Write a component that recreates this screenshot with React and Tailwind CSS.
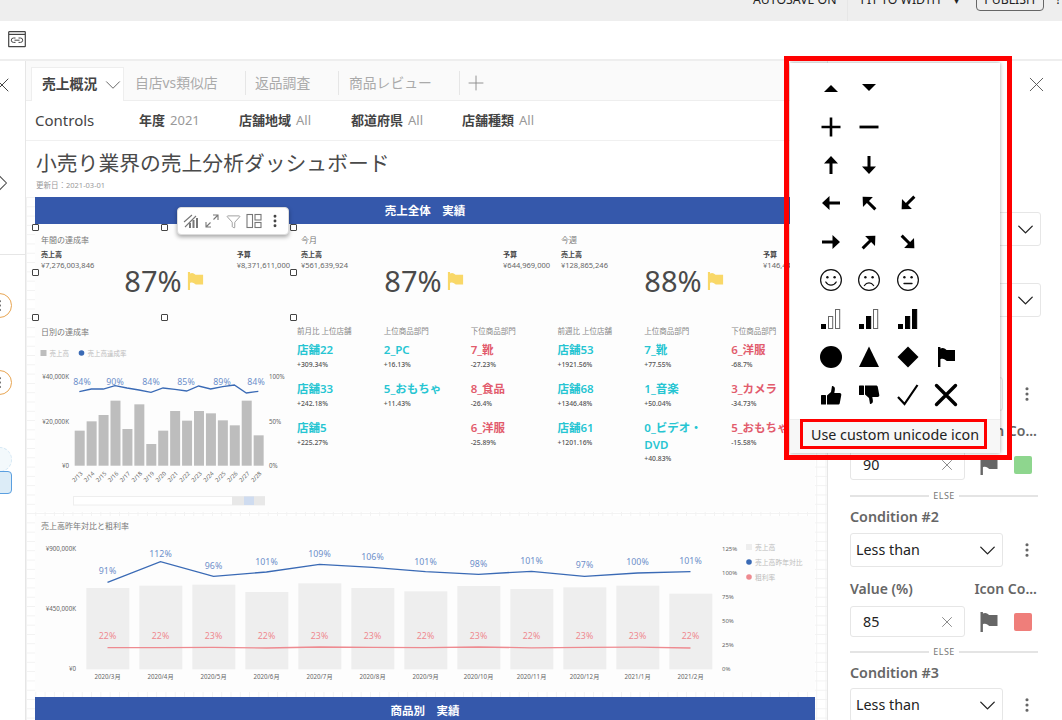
import React from "react";
import { X, ChevronDown, ChevronRight, Plus, EllipsisVertical, Filter } from "lucide-react";

const Arrow = ({ r = 0, s = 1 }) => (
  <svg width="24" height="24" viewBox="0 0 24 24">
    <path transform={`rotate(${r} 12 12) translate(12 12) scale(${s}) translate(-12 -12)`} d="M12 3 L19 10.5 H13.5 V21 H10.5 V10.5 H5 Z" fill="#000" />
  </svg>
);
const Svg = ({ children }) => <svg width="24" height="24" viewBox="0 0 24 24">{children}</svg>;
const Face = ({ mouth }) => (
  <Svg>
    <circle cx="12" cy="12" r="10.4" fill="none" stroke="#111" strokeWidth="1.2" />
    <circle cx="8.4" cy="9.2" r="1.2" fill="#111" />
    <circle cx="15.6" cy="9.2" r="1.2" fill="#111" />
    <path d={mouth} fill="none" stroke="#111" strokeWidth="1.3" strokeLinecap="round" />
  </Svg>
);
const Bars = ({ n }) => (
  <Svg>
    <rect x="2" y="17" width="5" height="5" fill="#000" />
    <rect x="9.5" y="9.5" width="4.2" height="12" fill={n > 1 ? "#000" : "#fff"} stroke={n > 1 ? "#000" : "#666"} />
    <rect x="16.5" y="2.5" width="4.2" height="19" fill={n > 2 ? "#000" : "#fff"} stroke={n > 2 ? "#000" : "#666"} />
  </Svg>
);
const flagPath = "M4 2h2.4v1.6c1.6-.9 3.2-.8 4.6.2l1.6 1.2H21v11h-8.2l-2-1.6c-1.4-.8-3-.8-4.4-.2V22H4z";
const Thumb = ({ down }) => (
  <Svg>
    <g transform={down ? "matrix(-1 0 0 -1 24 24) translate(24 0) scale(-1 1)" : undefined}>
      <rect x="2" y="12" width="5" height="9.5" rx="0.6" fill="#000" />
      <path d="M8 12.5 L12 9 L13 3 C15.2 2.6 16.4 5 15.8 7.2 L15.3 10 H20.6 C22 10 22.6 11 22.2 12.4 L20.8 20 C20.6 21 20 21.5 19 21.5 H8 Z" fill="#000" />
    </g>
  </Svg>
);

const icons = [
  <Svg key="a"><path d="M5 16 L19 16 L12 9 Z" fill="#000" /></Svg>,
  <Svg key="b"><path d="M5 8 L19 8 L12 15 Z" fill="#000" /></Svg>, null, null,
  <Svg key="c"><path d="M2.5 12h19M12 2.5v19" stroke="#000" strokeWidth="2.6" /></Svg>,
  <Svg key="d"><path d="M2.5 12h19" stroke="#000" strokeWidth="2.8" /></Svg>, null, null,
  <Arrow key="e" />, <Arrow key="f" r={180} />, null, null,
  <Arrow key="g" r={270} />, <Arrow key="h" r={315} />, <Arrow key="i" r={225} />, null,
  <Arrow key="j" r={90} />, <Arrow key="k" r={45} />, <Arrow key="l" r={135} />, null,
  <Face key="m" mouth="M6.8 14c2.4 4.2 8 4.2 10.4 0" />,
  <Face key="n" mouth="M7.4 17.5c2.4-3.6 6.8-3.6 9.2 0" />,
  <Face key="o" mouth="M8 15.5h8" />, null,
  <Bars key="p" n={1} />, <Bars key="q" n={2} />, <Bars key="r" n={3} />, null,
  <Svg key="s"><circle cx="12" cy="12" r="11" fill="#000" /></Svg>,
  <Svg key="t"><path d="M12 1.5 L22 22 H2 Z" fill="#000" /></Svg>,
  <Svg key="u"><path d="M12 1.5 L22.5 12 L12 22.5 L1.5 12 Z" fill="#000" /></Svg>,
  <Svg key="v"><path d={flagPath} fill="#000" /></Svg>,
  <Thumb key="w" />, <Thumb key="x" down />,
  <Svg key="y"><path d="M2 14 L8.5 21 L21.5 2" fill="none" stroke="#000" strokeWidth="2.2" /></Svg>,
  <Svg key="z"><path d="M2.5 2.5 L21.5 21.5 M21.5 2.5 L2.5 21.5" stroke="#000" strokeWidth="3.4" strokeLinecap="round" /></Svg>,
];

const Handle = ({ cls }) => <div className={`absolute w-[7px] h-[7px] bg-white border-[1.5px] border-[#444] rounded-[1px] ${cls}`} />;

const Kpi = ({ title, a, b, pct }) => (
  <div className="flex flex-col pl-[6px] pr-[5px] pt-[11px]">
    <div className="text-[8px] leading-[10px] text-[#777]">{title}</div>
    <div className="flex justify-between mt-[5px]">
      <div>
        <div className="text-[7px] leading-[10px] font-bold text-[#444]">売上高</div>
        <div className="text-[7.5px] leading-[11px] text-[#666]">{a}</div>
      </div>
      <div>
        <div className="text-[7px] leading-[10px] font-bold text-[#444]">予算</div>
        <div className="text-[7.5px] leading-[11px] text-[#666]">{b}</div>
      </div>
    </div>
    <div className="flex justify-center items-center gap-[5px] -mt-[6px] -ml-[3px]">
      <div className="text-[29px] leading-[32px] text-[#4a4a4a]">{pct}</div>
      <svg width="17" height="20" viewBox="3 2 19 20"><path d={flagPath} fill="#f9d868" /></svg>
    </div>
  </div>
);

const columns = [
  ["前月比 上位店舗", "t", [["店舗22", "+309.34%"], ["店舗33", "+242.18%"], ["店舗5", "+225.27%"]]],
  ["上位商品部門", "t", [["2_PC", "+16.13%"], ["5_おもちゃ", "+11.43%"]]],
  ["下位商品部門", "r", [["7_靴", "-27.23%"], ["8_食品", "-26.4%"], ["6_洋服", "-25.89%"]]],
  ["前週比 上位店舗", "t", [["店舗53", "+1921.56%"], ["店舗68", "+1346.48%"], ["店舗61", "+1201.16%"]]],
  ["上位商品部門", "t", [["7_靴", "+77.55%"], ["1_音楽", "+50.04%"], ["0_ビデオ・DVD", "+40.83%"]]],
  ["下位商品部門", "r", [["6_洋服", "-68.7%"], ["3_カメラ", "-34.73%"], ["5_おもちゃ", "-15.58%"]]],
];

const Rank = ({ title, tone, items }) => (
  <div className="pl-[3px] pr-[8px] pt-[6px] min-w-0">
    <div className="text-[7.5px] leading-[11px] text-[#888] whitespace-nowrap">{title}</div>
    <div className="flex flex-col gap-[10.5px] mt-[5px]">
      {items.map(([n, p]) => (
        <div key={n}>
          <div className={`text-[11.5px] leading-[16.5px] font-semibold ${tone === "t" ? "text-[#26c5d2]" : "text-[#e25b6c]"}`}>{n}</div>
          <div className="text-[6.8px] leading-[12px] font-medium text-[#555] whitespace-nowrap">{p}</div>
        </div>
      ))}
    </div>
  </div>
);

const dayBars = [632, 604, 585, 542, 627, 553, 672, 632, 573, 602, 573, 580, 601, 616, 542, 646];
const dayLine = [[238, 515], [274, 507], [310, 507], [345, 497], [381, 504], [417, 510], [453, 517], [489, 504], [525, 508], [560, 513], [596, 498], [632, 507], [668, 500], [703, 495], [739, 519], [775, 514]];
const dayLabels = [[82, "84%"], [115, "90%"], [151, "84%"], [186, "85%"], [222, "89%"], [256, "84%"]];

const DailyChart = () => (
  <svg width="259" height="192" viewBox="35 320 259 192" className="block">
    <text x="41" y="335" fontSize="8" fill="#777">日別の達成率</text>
    <rect x="40.5" y="350" width="6" height="6" fill="#bdbdbd" />
    <text x="49.5" y="355.5" fontSize="6.5" fill="#bbb">売上高</text>
    <circle cx="81.5" cy="353" r="2.8" fill="#3a6ab5" />
    <text x="87.5" y="355.5" fontSize="6.5" fill="#bbb">売上高達成率</text>
    {[["¥40,000K", 379], ["¥20,000K", 423.5], ["¥0", 468]].map(([t, y]) => <text key={t} x="69" y={y} fontSize="6.2" fill="#666" textAnchor="end">{t}</text>)}
    {[["100%", 379], ["50%", 423.5], ["0%", 468]].map(([t, y]) => <text key={t} x="269" y={y} fontSize="6.2" fill="#666">{t}</text>)}
    {dayBars.map((t, i) => <rect key={i} x={74.7 + i * 11.93} y={220 + t / 3} width="10" height={465.7 - 220 - t / 3} fill="#bdbdbd" />)}
    <polyline points={dayLine.map(([x, y]) => `${x / 3},${220 + y / 3}`).join(" ")} fill="none" stroke="#3a6ab5" strokeWidth="1.3" />
    {dayLabels.map(([x, t]) => <text key={x} x={x} y="385" fontSize="8.8" fill="#6d8fca" textAnchor="middle">{t}</text>)}
    {dayBars.map((_, i) => {
      const x = 83 + i * 11.93;
      return <text key={i} x={x} y="474" fontSize="5.8" fill="#666" textAnchor="end" transform={`rotate(-45 ${x} 474)`}>{`2/${13 + i}`}</text>;
    })}
    <rect x="73.5" y="496.5" width="191" height="8.5" fill="#fff" stroke="#eee" />
    <rect x="232" y="496.5" width="33" height="8.5" fill="#e8e8e8" />
    <rect x="244" y="496.5" width="10" height="8.5" fill="#cfdcf0" />
  </svg>
);

const months = ["2020/3月", "2020/4月", "2020/5月", "2020/6月", "2020/7月", "2020/8月", "2020/9月", "2020/10月", "2020/11月", "2020/12月", "2021/1月", "2021/2月"];
const tops = [588, 585.7, 584.7, 592, 583.3, 588, 591.3, 586, 589, 587.3, 585.7, 593.7];
const blue = [582.3, 561.7, 576.3, 572, 564.3, 567.3, 571.7, 574.3, 571.3, 576.3, 573, 571.7];
const blueLab = [["91%", 574], ["112%", 557], ["96%", 569], ["101%", 565], ["109%", 557], ["106%", 560], ["101%", 565], ["98%", 567], ["101%", 564], ["97%", 568], ["100%", 565], ["101%", 564]];
const redY = [647.7, 647.7, 647.4, 648, 647, 647.4, 647.6, 647, 647.8, 647.4, 647.2, 648];
const redLab = ["22%", "22%", "23%", "22%", "23%", "23%", "22%", "23%", "22%", "23%", "23%", "22%"];

const YearChart = () => (
  <svg width="779" height="176" viewBox="35 516 779 176" className="block">
    <text x="41" y="529" fontSize="8" fill="#777">売上高昨年対比と粗利率</text>
    {[["¥900,000K", 551], ["¥450,000K", 611], ["¥0", 671]].map(([t, y]) => <text key={t} x="76" y={y} fontSize="6.2" fill="#666" textAnchor="end">{t}</text>)}
    {tops.map((t, i) => <rect key={i} x={86.3 + i * 53} y={t} width="43" height={669.3 - t} fill="#eeeeee" />)}
    <polyline points={blue.map((y, i) => `${107.5 + i * 53},${y}`).join(" ")} fill="none" stroke="#3a6ab5" strokeWidth="1.3" />
    <polyline points={redY.map((y, i) => `${107.5 + i * 53},${y}`).join(" ")} fill="none" stroke="#ee8a90" strokeWidth="1.3" />
    {blueLab.map(([t, y], i) => <text key={i} x={107.5 + i * 53} y={y} fontSize="8.8" fill="#6d8fca" textAnchor="middle">{t}</text>)}
    {redLab.map((t, i) => <text key={i} x={107.5 + i * 53} y="639" fontSize="8.8" fill="#ee8a90" textAnchor="middle">{t}</text>)}
    {months.map((t, i) => <text key={t} x={107.5 + i * 53} y="679" fontSize="6.2" fill="#666" textAnchor="middle">{t}</text>)}
    {[["125%", 551], ["100%", 575], ["75%", 599], ["50%", 623], ["25%", 647], ["0%", 671]].map(([t, y]) => <text key={t} x="722" y={y} fontSize="6" fill="#666">{t}</text>)}
    <rect x="746" y="544" width="6" height="6" fill="#eee" />
    <text x="755" y="550" fontSize="6.8" fill="#bbb">売上高</text>
    <circle cx="749" cy="562" r="2.8" fill="#3a6ab5" />
    <text x="755" y="565" fontSize="6.8" fill="#bbb">売上高昨年対比</text>
    <circle cx="749" cy="577" r="2.8" fill="#ee8a90" />
    <text x="755" y="580" fontSize="6.8" fill="#bbb">粗利率</text>
  </svg>
);

const Select = ({ label, wide }) => (
  <div className={`h-[34px] border border-[#e6e6e6] rounded-[3px] bg-white flex items-center justify-between pl-[5px] pr-[1px] text-[14.3px] text-[#222] ${wide ? "w-[191px]" : "w-[153px]"}`}>
    <span>{label}</span>
    <ChevronDown size={27} strokeWidth={1.2} color="#222" />
  </div>
);

const Dots = () => <EllipsisVertical size={18} color="#666" strokeWidth={2.2} />;
const Else = () => (
  <div className="flex items-center gap-[4px] w-[188px] h-[14px] text-[9px] tracking-[0.5px] text-[#777]">
    <div className="flex-1 h-[1.5px] bg-[#e4e4e4]" />ELSE<div className="flex-1 h-[1.5px] bg-[#e4e4e4]" />
  </div>
);
const ValueRow = ({ v, color }) => (
  <div className="flex items-center">
    <div className="w-[115px] h-[31px] border border-[#e6e6e6] rounded-[3px] flex items-center justify-between pl-[12px] pr-[8px] text-[14.3px] text-[#222]">
      <span>{v}</span>
      <X size={18} strokeWidth={1} color="#666" />
    </div>
    <svg width="20" height="20" viewBox="3 2 19 20" className="ml-[14px]"><path d={flagPath} fill="#666" /></svg>
    <div className="w-[18px] h-[18px] rounded-[2px] ml-[15px]" style={{ background: color }} />
  </div>
);
const SelectDots = ({ label }) => (
  <div className="flex items-center gap-[15px]"><Select label={label} /><Dots /></div>
);
const Labels = () => (
  <div className="flex justify-between w-[187px] text-[14px] font-semibold leading-[18px] text-[#666] whitespace-nowrap">
    <span>Value (%)</span><span>Icon Co...</span>
  </div>
);

const tabDiv = "w-px h-[24px] bg-[#e6e6e6]";

export default function App() {
  return (
    <div className="relative w-[1062px] h-[720px] overflow-hidden bg-white font-['Noto_Sans','Noto_Sans_CJK_JP',sans-serif]">
      {/* top bar */}
      <header className="h-[21px] bg-[#eeeeee] overflow-hidden flex items-start pl-[753px] text-[12.3px] leading-[16px] text-[#222] whitespace-nowrap">
        <span className="-mt-[8px]">AUTOSAVE ON</span>
        <div className="w-px h-[21px] bg-[#e6e6e6] ml-[10px]" />
        <span className="-mt-[8px] ml-[13px]">FIT TO WIDTH</span>
        <span className="-mt-[8px] ml-[13px] text-[10px]">▾</span>
        <div className="-mt-[8px] ml-[17px] h-[19px] w-[68px] shrink-0 border border-[#666] rounded-[4px] text-center leading-[13px]">PUBLISH</div>
        <span className="-mt-[8px] ml-[12px]">?</span>
      </header>
      {/* toolbar */}
      <div className="h-[40px] border-b-2 border-[#eeeeee] pl-[8px] pt-[10px]">
        <svg width="18" height="17" viewBox="0 0 18 17" fill="none" stroke="#444">
          <rect x="0.7" y="0.7" width="16.6" height="15" rx="0.5" strokeWidth="1.2" />
          <path d="M1 3.4h16" strokeWidth="1.2" />
          <path d="M7.5 7h-2a2.2 2.2 0 000 4.4h2M10.5 7h2a2.2 2.2 0 010 4.4h-2M6.5 9.2h5" strokeWidth="1" />
        </svg>
      </div>

      <div className="flex h-[659px]">
        {/* left rail */}
        <aside className="w-[26px] shrink-0 border-r border-[#e6e6e6] overflow-hidden flex flex-col">
          <X size={24} strokeWidth={1} color="#444" className="-ml-[10px] mt-[12px] shrink-0" />
          <ChevronRight size={28} strokeWidth={0.9} color="#444" className="-ml-[11px] mt-[72px] shrink-0" />
          <div className="h-px bg-[#e6e6e6] mt-[57px] shrink-0" />
          <div className="-ml-[13px] mt-[38px] w-[25px] h-[25px] shrink-0 rounded-full border border-[#e8a552] flex items-center justify-end text-[#333]"><EllipsisVertical size={15} className="mr-[4px]" /></div>
          <div className="-ml-[13px] mt-[52px] w-[25px] h-[25px] shrink-0 rounded-full border border-[#e8a552] flex items-center justify-end text-[#333]"><EllipsisVertical size={15} className="mr-[4px]" /></div>
          <div className="-ml-[13px] mt-[52px] w-[25px] h-[25px] shrink-0 rounded-full border border-dashed border-[#d5e8f5] bg-[#f3f9fc]" />
          <div className="-ml-[13px] -mt-[1px] w-[25px] h-[23px] shrink-0 rounded-[4px] border border-[#5a9fe0] bg-[#dcecf7]" />
        </aside>

        {/* main */}
        <main className="w-[801px] shrink-0 flex flex-col">
          <div className="h-[40px] shrink-0 bg-[#fafafa] border-b border-[#eeeeee] flex items-end pl-[5px] text-[13.8px] text-[#aaa] whitespace-nowrap">
            <div className="w-[93px] h-[34px] bg-white border border-b-0 border-[#eeeeee] flex items-center pl-[10px] font-semibold text-[#444] shrink-0 -mb-px">
              売上概況<ChevronDown size={26} strokeWidth={0.9} color="#666" className="ml-[3px] -mr-[3px] shrink-0" />
            </div>
            <div className="h-[34px] flex items-center">
              <span className="ml-[11px] w-[81px]">自店vs類似店</span>
              <div className={`${tabDiv} ml-[29px]`} />
              <span className="ml-[9px] w-[56px]">返品調査</span>
              <div className={`${tabDiv} ml-[27px]`} />
              <span className="ml-[10px] w-[83px]">商品レビュー</span>
              <div className={`${tabDiv} ml-[27px]`} />
              <Plus size={24} strokeWidth={0.9} color="#888" className="ml-[4px]" />
            </div>
          </div>
          <div className="h-[40px] shrink-0 border-b border-[#f0f0f0] flex items-center pl-[9px] text-[13px] whitespace-nowrap">
            <span className="w-[104px] text-[15px] text-[#444]">Controls</span>
            <span className="w-[100px]"><b className="font-semibold text-[#444]">年度</b><span className="ml-[5px] text-[#999]">2021</span></span>
            <span className="w-[112px]"><b className="font-semibold text-[#444]">店舗地域</b><span className="ml-[5px] text-[#999]">All</span></span>
            <span className="w-[111px]"><b className="font-semibold text-[#444]">都道府県</b><span className="ml-[5px] text-[#999]">All</span></span>
            <span><b className="font-semibold text-[#444]">店舗種類</b><span className="ml-[5px] text-[#999]">All</span></span>
          </div>
          <div className="h-[56px] shrink-0 pl-[10px]">
            <h1 className="pt-[7px] text-[20.8px] leading-[30px] text-[#4a4a4a] font-normal">小売り業界の売上分析ダッシュボード</h1>
            <div className="text-[7.5px] leading-[12px] text-[#999] mt-[1px]">更新日：2021-03-01</div>
          </div>
          <div className="flex-1 min-h-0 overflow-hidden pl-[9px] pr-[12px] bg-[linear-gradient(#f2f2f2_1px,transparent_1px),linear-gradient(90deg,#f2f2f2_1px,transparent_1px)] bg-[size:9.3px_9.3px]">
            <div className="h-[27px] bg-[#3558ab] text-white text-[11.5px] font-bold flex items-center justify-center">売上全体　実績</div>
            <div className="grid grid-cols-3 h-[96px] bg-[#fdfdfd]">
              <Kpi title="年間の達成率" a="¥7,276,003,846" b="¥8,371,611,000" pct="87%" />
              <Kpi title="今月" a="¥561,639,924" b="¥644,969,000" pct="87%" />
              <Kpi title="今週" a="¥128,865,246" b="¥146,447,000" pct="88%" />
            </div>
            <div className="flex h-[192px] bg-[#fdfdfd]">
              <div className="w-[259px] shrink-0"><DailyChart /></div>
              <div className="flex-1 grid grid-cols-6">
                {columns.map(([t, tone, items], i) => <Rank key={i} title={t} tone={tone} items={items} />)}
              </div>
            </div>
            <div className="mt-[4px] h-[176px] bg-[#fdfdfd]"><YearChart /></div>
            <div className="mt-[5px] h-[27px] bg-[#3558ab] text-white text-[11.5px] font-bold flex items-center justify-center">商品別　実績</div>
          </div>
        </main>

        {/* right panel */}
        <aside className="flex-1 border-l border-[#e6e6e6] flex flex-col pl-[22px]">
          <div className="flex justify-end pr-[13px] pt-[11px]"><X size={25} strokeWidth={0.9} color="#555" /></div>
          <div className="mt-[115px]"><Select label="" wide /></div>
          <div className="mt-[37px]"><Select label="" wide /></div>
          <div className="mt-[60px]"><SelectDots label="" /></div>
          <div className="mt-[11px]"><Labels /></div>
          <div className="mt-[9px]"><ValueRow v="90" color="#8ed68e" /></div>
          <div className="mt-[9px]"><Else /></div>
          <div className="mt-[5px] text-[14.3px] leading-[18px] font-semibold text-[#666]">Condition #2</div>
          <div className="mt-[7px]"><SelectDots label="Less than" /></div>
          <div className="mt-[13px]"><Labels /></div>
          <div className="mt-[8px]"><ValueRow v="85" color="#ef7e7a" /></div>
          <div className="mt-[8px]"><Else /></div>
          <div className="mt-[5px] text-[14.3px] leading-[18px] font-semibold text-[#666]">Condition #3</div>
          <div className="mt-[6px]"><SelectDots label="Less than" /></div>
        </aside>
      </div>

      {/* selection handles */}
      <Handle cls="left-[32px] top-[224px]" />
      <Handle cls="left-[161px] top-[224px]" />
      <Handle cls="left-[290px] top-[224px]" />
      <Handle cls="left-[32px] top-[269px]" />
      <Handle cls="left-[290px] top-[269px]" />
      <Handle cls="left-[32px] top-[314px]" />
      <Handle cls="left-[161px] top-[314px]" />
      <Handle cls="left-[290px] top-[314px]" />

      {/* floating visual toolbar */}
      <div className="absolute left-[177px] top-[207px] w-[112px] h-[28px] bg-white rounded-[4px] border border-[#ddd] shadow-[0_2px_4px_rgba(0,0,0,0.35)] flex items-center justify-between px-[5px] text-[#666]">
        <svg width="16" height="16" viewBox="0 0 16 16" fill="none" stroke="#777">
          <path d="M1 9L9 2M2 14L13 3" strokeWidth="1.1" />
          <rect x="6" y="10" width="2" height="5" fill="#777" stroke="none" />
          <rect x="9.5" y="7" width="2" height="8" fill="#777" stroke="none" />
          <rect x="13" y="5" width="2" height="10" fill="#777" stroke="none" />
        </svg>
        <svg width="16" height="16" viewBox="0 0 16 16" fill="none" stroke="#777" strokeWidth="1.1">
          <path d="M9 2h5v5M14 2L9.5 6.5M2 9v5h5M2 14l4.5-4.5" />
        </svg>
        <Filter size={15} strokeWidth={1.1} color="#777" />
        <svg width="16" height="16" viewBox="0 0 16 16" fill="none" stroke="#777" strokeWidth="1.1">
          <rect x="1" y="1.5" width="5.5" height="13" />
          <rect x="9" y="1.5" width="6" height="5.5" />
          <rect x="9" y="9.5" width="6" height="5" />
        </svg>
        <EllipsisVertical size={16} strokeWidth={2.4} color="#444" />
      </div>

      {/* icon menu */}
      <div className="absolute left-[790px] top-[63px] w-[210px] h-[390px] bg-white shadow-[0_0_4px_rgba(0,0,0,0.35)] flex flex-col">
        <div className="grid grid-cols-[repeat(4,38.3px)] auto-rows-[38.4px] pl-[22px] pt-[6px]">
          {icons.map((ic, i) => <div key={i} className="flex items-center justify-center">{ic}</div>)}
        </div>
        <div className="mt-auto h-[34px] pb-[4px] bg-[#f7f7f7] border-t border-[#eeeeee] flex items-center justify-center text-[14.3px] text-[#222] whitespace-nowrap">
          Use custom unicode icon
        </div>
      </div>
      {/* red annotations */}
      <div className="absolute left-[784px] top-[56px] w-[228px] h-[404px] border-[5px] border-[#ff0000] pointer-events-none" />
      <div className="absolute left-[800px] top-[419px] w-[187px] h-[30px] border-[3px] border-[#ff0000] pointer-events-none" />
    </div>
  );
}
